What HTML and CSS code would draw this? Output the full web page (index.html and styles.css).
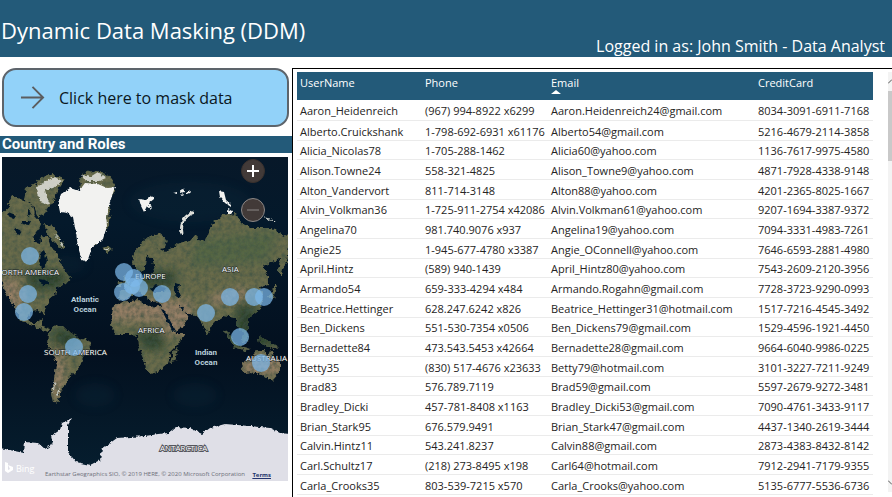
FILE: index.html
```html
<!DOCTYPE html>
<html lang="en">
<head>
<meta charset="utf-8">
<title>Dynamic Data Masking (DDM)</title>
<link rel="stylesheet" href="styles.css">
</head>
<body>
<header class="banner">
  <h1 class="title">Dynamic Data Masking (DDM)</h1>
  <p class="login">Logged in as: John Smith - Data Analyst</p>
</header>
<main class="report">
  <section class="side">
    <button class="mask-button" type="button">
      <svg class="arrow" viewBox="0 0 26 26" aria-hidden="true"><path d="M1 13H24M13 2L24 13L13 24"/></svg>
      <span>Click here to mask data</span>
    </button>
    <h2 class="map-title">Country and Roles</h2>
    <div class="map">
      <svg class="world" viewBox="2 157 286 324" role="img" aria-label="World map">
        <defs>
          <filter id="terrain" x="-5%" y="-5%" width="110%" height="110%">
            <feTurbulence type="fractalNoise" baseFrequency="0.22" numOctaves="3" seed="4" result="n"/>
            <feDisplacementMap in="SourceGraphic" in2="n" scale="6" xChannelSelector="R" yChannelSelector="G" result="d"/>
            <feColorMatrix in="n" type="matrix" values="0 0 0 0 0.05  0 0 0 0 0.09  0 0 0 0 0.06  1.5 0 0 0 -0.5" result="s"/>
            <feComposite in="s" in2="d" operator="in" result="t"/>
            <feMerge><feMergeNode in="d"/><feMergeNode in="t"/></feMerge>
          </filter>
          <filter id="coast" x="-5%" y="-5%" width="110%" height="110%">
            <feTurbulence type="fractalNoise" baseFrequency="0.3" numOctaves="2" seed="9" result="n"/>
            <feDisplacementMap in="SourceGraphic" in2="n" scale="4" xChannelSelector="R" yChannelSelector="G"/>
          </filter>
          <filter id="soft" x="-20%" y="-20%" width="140%" height="140%"><feGaussianBlur stdDeviation="5"/></filter>
          <clipPath id="landclip"><use href="#land"/></clipPath>
          <linearGradient id="sea" x1="0" y1="0" x2="0" y2="1">
            <stop offset="0" stop-color="#071829"/><stop offset=".2" stop-color="#04192b"/>
            <stop offset=".6" stop-color="#03101f"/><stop offset="1" stop-color="#061f30"/>
          </linearGradient>
        </defs>
        <rect x="2" y="157" width="286" height="324" fill="url(#sea)"/>
        <g filter="url(#soft)" fill="#0a2d40" opacity=".25">
          <ellipse cx="190" cy="202" rx="60" ry="20"/><ellipse cx="95" cy="395" rx="20" ry="12"/>
          <ellipse cx="195" cy="395" rx="22" ry="12"/><ellipse cx="66" cy="265" rx="20" ry="9"/>
        </g>
        <g filter="url(#terrain)">
          <g>
            <path id="land" fill="#6a6c4b" d="M0 216L10 207L18 205L24 201L32 205L34 216L41 224L38 231L32 235L34 242L40 243L42 236L48 238L51 246L58 257L63 267L71 278L66 284L57 287L55 294L49 299L46 307L44 315L37 310L29 312L28 319L34 324L42 319L40 326L49 329L47 332L34 326L20 320L15 307L7 294L0 278ZM48 334L55 324L63 326L70 333L80 338L91 342L90 350L83 358L80 366L75 372L68 378L66 384L60 392L57 398L60 403L54 402L52 392L54 380L56 366L54 355L47 345ZM112 308L120 302L139 300L149 307L163 306L166 317L175 333L185 333L178 344L170 352L168 364L158 372L150 374L146 369L144 358L138 345L137 336L128 334L117 334L110 325ZM132 263L134 252L142 243L150 236L158 233L168 241L166 247L158 248L165 252L177 244L190 241L196 234L198 240L205 242L212 224L222 215L236 213L240 222L250 228L260 228L270 228L280 233L290 237L289 244L286 262L281 276L278 272L280 259L275 260L263 266L268 275L268 285L259 288L263 296L261 309L252 316L247 319L249 329L244 335L239 328L235 318L224 316L214 322L207 334L202 322L198 317L188 313L184 311L188 318L180 330L172 333L163 310L161 302L150 303L148 296L144 296L139 290L134 294L125 300L119 299L120 291L129 287L135 279L143 277L149 279L155 270L153 260L147 255L146 266L140 272L135 267ZM241 363L250 358L258 350L265 350L267 357L270 350L275 357L280 363L280 372L272 381L262 375L252 372L243 373ZM173 352L178 347L175 362L170 363ZM258 337L268 340L279 347L274 349L259 343ZM223 328L228 332L237 345L250 349L247 351L234 347ZM241 336L247 333L249 342L242 344ZM124 277L128 280L130 287L123 288ZM119 282L123 282L121 287L117 287ZM268 297L274 289L274 283L277 286L273 298ZM102 248L108 246L113 250L107 253ZM44 224L53 226L65 247L61 249L49 237ZM26 188L34 185L40 200L47 212L38 217L33 205L24 200ZM8 205L12 196L28 202L30 211L14 214ZM33 188L40 178L53 174L65 180L58 190L53 202L47 210L38 203ZM79 182L84 173L98 170L108 175L116 186L110 198L109 225L103 237L91 248L99 228Z"/>
          </g>
          <g clip-path="url(#landclip)"><g filter="url(#soft)">
            <path fill="#957f66" d="M105 301H190V321H105ZM160 300H192V335H165ZM0 280L18 279L22 300L13 322H2ZM53 350H60L66 370L57 400H50ZM204 298L245 287L250 295L215 306ZM242 356H281V375H242Z"/>
            <path fill="#2b4029" d="M52 329H71L79 338L76 350L54 346ZM134 332H164L163 349L145 350ZM24 270H55L70 277L54 290H32ZM137 271H175V287H137ZM236 305H257L250 337H236ZM228 328H280V346H229Z"/>
            <path fill="#566645" d="M196 240L278 230L268 262L190 267Z"/>
          </g></g>
        </g>
        <g fill="#06182a" filter="url(#coast)">
          <path d="M151 288L157 285L166 288L164 292L153 292ZM174 283L180 284L178 290L181 297L177 298L174 290ZM40 253L44 250L47 261L43 270L39 261ZM38 279L45 280L50 284L43 286ZM161 309L164 310L176 331L173 332ZM178 304L184 308L183 311ZM23 221L31 221L29 225L21 224ZM8 212L16 215L14 218L7 216ZM15 228L22 231L20 234L14 232ZM28 208L31 214L28 216Z"/>
        </g>
        <g filter="url(#coast)" fill="#f2f2f0">
          <path d="M61 194L70 188L79 191L85 183L98 184L107 188L115 187L110 202L106 216L107 226L103 239L92 248L87 262L82 260L78 247L76 233L73 217L67 213L60 212L58 203Z"/>
          <path opacity=".75" d="M37 187L46 181L55 177L62 181L53 188L45 190L47 197L50 204L44 205L39 198ZM82 175L90 177L98 172L106 178L99 181L86 181Z"/>
          <path d="M139 199L146 200L152 196L154 199L149 203L151 209L147 206L144 212L141 206ZM173 193L177 192L177 194ZM180 190L183 189L184 192L181 193ZM186 192L191 190L190 193L186 195ZM181 195L184 194L183 196ZM219 191L224 192L226 200L231 204L231 207L225 203L220 197ZM228 209L232 211L231 215L228 213Z"/>
          <path fill="none" stroke="#dedfda" stroke-width="3" d="M182 234Q180 222 186 217T194 213"/>
          <path fill="none" stroke="#ccd0ca" d="M54 233L60 240L63 247M104 249L109 250M55 382L53 393M59 389L57 396M264 218L270 219M271 220L276 221"/>
        </g>
        <path filter="url(#coast)" fill="#dfdfe7" d="M0 448L24 453L25 442L38 443L45 449L53 444L51 436L60 430L62 423L72 418L68 425L68 452L76 462L90 465L100 460L102 449L117 438L145 436L158 434L168 433L176 427L190 428L202 434L210 428L225 424L250 426L270 428L280 433L291 434V486H0Z"/>
        <g class="land-label">
          <text x="59" y="275" text-anchor="end">NORTH AMERICA</text><text x="135" y="279">EUROPE</text><text x="222" y="272">ASIA</text>
          <text x="138" y="333">AFRICA</text><text x="44" y="355">SOUTH AMERICA</text><text x="246" y="361">AUSTRALIA</text>
          <text class="outlined" x="160" y="451">ANTARCTICA</text>
        </g>
        <g class="bubbles">
          <circle cx="30" cy="256" r="9"/><circle cx="28" cy="294" r="9"/><circle cx="24" cy="312" r="9"/><circle cx="74" cy="347" r="9"/>
          <circle cx="124" cy="272" r="9"/><circle cx="134" cy="278" r="9"/><circle cx="123" cy="292" r="9"/><circle cx="132" cy="286" r="8"/><circle cx="139" cy="288" r="9"/>
          <circle cx="162" cy="294" r="9"/><circle cx="206" cy="313" r="9"/><circle cx="230" cy="297" r="9"/><circle cx="254" cy="297" r="9"/><circle cx="264" cy="297" r="9"/>
          <circle cx="240" cy="337" r="9"/><circle cx="261" cy="363" r="9"/>
        </g>
        <g class="sea-label">
          <text x="85" y="302">Atlantic</text><text x="85" y="312">Ocean</text>
          <text x="206" y="355">Indian</text><text x="206" y="365">Ocean</text>
        </g>
        <path fill="#fff" d="M5 462L8 463V470L10 469L8 465L13 467V470L8 473L5 471Z"/>
        <text class="bing" x="16" y="472">Bing</text>
        <text class="credit" x="45" y="476">Earthstar Geographics SIO, © 2019 HERE, © 2020 Microsoft Corporation</text>
      </svg>
      <a class="terms" href="#terms">Terms</a>
      <div class="zoom">
        <button type="button" aria-label="Zoom in"><svg viewBox="0 0 22 22"><path d="M5 11H17M11 5V17"/></svg></button>
        <button class="disabled" type="button" aria-label="Zoom out"><svg viewBox="0 0 22 22"><path d="M5 11H17"/></svg></button>
      </div>
    </div>
  </section>
  <section class="panel">
    <table class="users">
      <colgroup><col class="c-user"><col class="c-phone"><col class="c-email"><col class="c-card"></colgroup>
      <thead><tr><th>UserName</th><th>Phone</th><th aria-sort="ascending"><span class="sorted">Email</span></th><th>CreditCard</th></tr></thead>
      <tbody>
        <tr><td>Aaron_Heidenreich</td><td>(967) 994-8922 x6299</td><td>Aaron.Heidenreich24@gmail.com</td><td>8034-3091-6911-7168</td></tr>
        <tr><td>Alberto.Cruickshank</td><td>1-798-692-6931 x61176</td><td>Alberto54@gmail.com</td><td>5216-4679-2114-3858</td></tr>
        <tr><td>Alicia_Nicolas78</td><td>1-705-288-1462</td><td>Alicia60@yahoo.com</td><td>1136-7617-9975-4580</td></tr>
        <tr><td>Alison.Towne24</td><td>558-321-4825</td><td>Alison_Towne9@yahoo.com</td><td>4871-7928-4338-9148</td></tr>
        <tr><td>Alton_Vandervort</td><td>811-714-3148</td><td>Alton88@yahoo.com</td><td>4201-2365-8025-1667</td></tr>
        <tr><td>Alvin_Volkman36</td><td>1-725-911-2754 x42086</td><td>Alvin.Volkman61@yahoo.com</td><td>9207-1694-3387-9372</td></tr>
        <tr><td>Angelina70</td><td>981.740.9076 x937</td><td>Angelina19@yahoo.com</td><td>7094-3331-4983-7261</td></tr>
        <tr><td>Angie25</td><td>1-945-677-4780 x3387</td><td>Angie_OConnell@yahoo.com</td><td>7646-6593-2881-4980</td></tr>
        <tr><td>April.Hintz</td><td>(589) 940-1439</td><td>April_Hintz80@yahoo.com</td><td>7543-2609-2120-3956</td></tr>
        <tr><td>Armando54</td><td>659-333-4294 x484</td><td>Armando.Rogahn@gmail.com</td><td>7728-3723-9290-0993</td></tr>
        <tr><td>Beatrice.Hettinger</td><td>628.247.6242 x826</td><td>Beatrice_Hettinger31@hotmail.com</td><td>1517-7216-4545-3492</td></tr>
        <tr><td>Ben_Dickens</td><td>551-530-7354 x0506</td><td>Ben_Dickens79@gmail.com</td><td>1529-4596-1921-4450</td></tr>
        <tr><td>Bernadette84</td><td>473.543.5453 x42664</td><td>Bernadette28@gmail.com</td><td>9664-6040-9986-0225</td></tr>
        <tr><td>Betty35</td><td>(830) 517-4676 x23633</td><td>Betty79@hotmail.com</td><td>3101-3227-7211-9249</td></tr>
        <tr><td>Brad83</td><td>576.789.7119</td><td>Brad59@gmail.com</td><td>5597-2679-9272-3481</td></tr>
        <tr><td>Bradley_Dicki</td><td>457-781-8408 x1163</td><td>Bradley_Dicki53@gmail.com</td><td>7090-4761-3433-9117</td></tr>
        <tr><td>Brian_Stark95</td><td>676.579.9491</td><td>Brian_Stark47@gmail.com</td><td>4437-1340-2619-3444</td></tr>
        <tr><td>Calvin.Hintz11</td><td>543.241.8237</td><td>Calvin88@gmail.com</td><td>2873-4383-8432-8142</td></tr>
        <tr><td>Carl.Schultz17</td><td>(218) 273-8495 x198</td><td>Carl64@hotmail.com</td><td>7912-2941-7179-9355</td></tr>
        <tr><td>Carla_Crooks35</td><td>803-539-7215 x570</td><td>Carla_Crooks@yahoo.com</td><td>5135-6777-5536-6736</td></tr>
      </tbody>
    </table>
    <div class="scrollbar" aria-hidden="true">
      <svg viewBox="0 0 4 8"><path d="M0 6L4 2"/></svg>
      <div class="thumb"></div>
      <svg class="down" viewBox="0 0 4 8"><path d="M0 2L4 6"/></svg>
    </div>
  </section>
</main>
</body>
</html>
```
FILE: styles.css
```css
* { box-sizing: border-box; }

body {
  margin: 0;
  min-height: 100vh;
  overflow: hidden;
  background: #fff;
  color: #252423;
  font-family: "Open Sans", "Noto Sans", sans-serif;
}

h1, h2, p { margin: 0; font-weight: 400; }

.banner {
  display: flex;
  justify-content: space-between;
  align-items: flex-end;
  height: 57px;
  padding: 0 7px 0 1px;
  background: #235a79;
  color: #fff;
  white-space: nowrap;
}

.title { font-size: 22px; line-height: 30px; padding-bottom: 12px; }
.login { font-size: 16px; line-height: 22px; }

.report {
  display: grid;
  grid-template-columns: 292px 1fr;
  padding-top: 11px;
}

.mask-button {
  display: flex;
  align-items: center;
  gap: 14px;
  width: calc(100% - 5px);
  height: 59px;
  margin: 0 0 9px 2px;
  padding: 0 16px;
  border: 2px solid #5d646b;
  border-radius: 14px;
  background: #92d2f9;
  color: #0b1722;
  font: 16px/22px "Open Sans", "Noto Sans", sans-serif;
  white-space: nowrap;
}

.arrow { width: 25px; height: 25px; fill: none; stroke: #5b5d60; stroke-width: 2; }

.map-title {
  padding-left: 2px;
  background: #235a79;
  color: #fff;
  font: 700 15px/17px Roboto, sans-serif;
}

.map { position: relative; margin: 4px 4px 0 2px; overflow: hidden; }
.world { display: block; width: 100%; height: auto; }

.bubbles { fill: #7db8ea; fill-opacity: .72; }
.land-label { fill: #fff; font-size: 8px; paint-order: stroke; stroke: #1b2528; stroke-width: 1; }
.land-label .outlined { stroke: #55565d; stroke-width: 2; }
.sea-label { fill: #b9d0dc; font-family: Roboto, sans-serif; font-size: 8px; font-weight: 700; text-anchor: middle; }
.bing { fill: #fff; font-size: 9px; }
.credit { fill: #6c6e78; font-size: 6px; }

.terms {
  position: absolute;
  right: 17px;
  bottom: 2px;
  color: #23346d;
  font-size: 6px;
  font-weight: 700;
  line-height: 8px;
}

.zoom {
  position: absolute;
  top: 2px;
  right: 23px;
  display: grid;
  gap: 15px;
}

.zoom button {
  width: 24px;
  height: 24px;
  padding: 0;
  border: 1px solid #39302d;
  border-radius: 50%;
  background: #423a38;
}

.zoom svg { display: block; width: 22px; height: 22px; fill: none; stroke: #fff; stroke-width: 2; }
.zoom .disabled { border-color: #8b8786; }
.zoom .disabled svg { stroke: #8b8786; stroke-width: 1; }

.panel {
  display: flex;
  justify-content: space-between;
  height: calc(100vh - 68px);
  padding: 3px 0 0 4px;
  border: solid #000;
  border-width: 1px 0 0 1px;
  overflow: hidden;
}

.users {
  flex: 1;
  align-self: flex-start;
  margin-right: 15px;
  border-collapse: collapse;
  table-layout: fixed;
  font-size: 11px;
  line-height: 15px;
  white-space: nowrap;
}

.c-user { width: 125px; }
.c-phone { width: 126px; }
.c-email { width: 207px; }

.users th {
  height: 28px;
  padding: 3px 0 0 3px;
  background: #235a79;
  color: #fff;
  font-weight: 400;
  text-align: left;
  vertical-align: top;
}

.users td { height: 20px; padding: 2px 0 0 3px; border-bottom: 1px solid #ebebeb; }
.users tr:nth-child(3n) td { height: 19px; padding-top: 1px; }

.sorted { position: relative; }
.sorted::after {
  content: "";
  position: absolute;
  left: 0;
  top: 15px;
  border: solid transparent;
  border-width: 0 5px 4px;
  border-bottom-color: #fff;
}

.scrollbar { display: flex; flex-direction: column; width: 4px; margin-bottom: 5px; background: #f3f3f3; }
.scrollbar svg { width: 4px; height: 19px; fill: none; stroke: #555; }
.thumb { height: 70px; background: #c9c9c9; }
.scrollbar .down { margin-top: auto; }
```
